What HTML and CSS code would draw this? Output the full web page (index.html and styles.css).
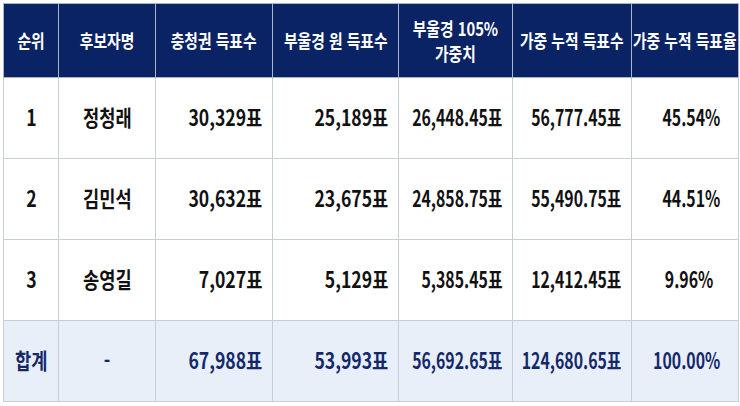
FILE: index.html
```html
<!DOCTYPE html>
<html lang="ko">
<head>
<meta charset="utf-8">
<title>가중 누적 득표</title>
<link rel="stylesheet" href="styles.css">
</head>
<body>
<table class="votes">
  <colgroup>
    <col class="c1"><col class="c2"><col class="c3"><col class="c4"><col class="c5"><col class="c6"><col class="c7">
  </colgroup>
  <thead>
    <tr>
      <th><div class="cell mid"><span class="t">순위</span></div></th>
      <th><div class="cell mid"><span class="t">후보자명</span></div></th>
      <th><div class="cell mid"><span class="t">충청권 득표수</span></div></th>
      <th><div class="cell mid"><span class="t">부울경 원 득표수</span></div></th>
      <th><div class="cell mid"><span class="t">부울경 105%<br>가중치</span></div></th>
      <th><div class="cell mid"><span class="t">가중 누적 득표수</span></div></th>
      <th><div class="cell mid"><span class="t">가중 누적 득표율</span></div></th>
    </tr>
  </thead>
  <tbody>
    <tr>
      <td><div class="cell mid"><span class="t">1</span></div></td>
      <td><div class="cell mid"><span class="t">정청래</span></div></td>
      <td><div class="cell end"><span class="t">30,329표</span></div></td>
      <td><div class="cell end"><span class="t">25,189표</span></div></td>
      <td><div class="cell end"><span class="t dec">26,448.45표</span></div></td>
      <td><div class="cell end"><span class="t dec">56,777.45표</span></div></td>
      <td><div class="cell end pct"><span class="t dec">45.54%</span></div></td>
    </tr>
    <tr>
      <td><div class="cell mid"><span class="t">2</span></div></td>
      <td><div class="cell mid"><span class="t">김민석</span></div></td>
      <td><div class="cell end"><span class="t">30,632표</span></div></td>
      <td><div class="cell end"><span class="t">23,675표</span></div></td>
      <td><div class="cell end"><span class="t dec">24,858.75표</span></div></td>
      <td><div class="cell end"><span class="t dec">55,490.75표</span></div></td>
      <td><div class="cell end pct"><span class="t dec">44.51%</span></div></td>
    </tr>
    <tr>
      <td><div class="cell mid"><span class="t">3</span></div></td>
      <td><div class="cell mid"><span class="t">송영길</span></div></td>
      <td><div class="cell end"><span class="t">7,027표</span></div></td>
      <td><div class="cell end"><span class="t">5,129표</span></div></td>
      <td><div class="cell end"><span class="t dec">5,385.45표</span></div></td>
      <td><div class="cell end"><span class="t dec">12,412.45표</span></div></td>
      <td><div class="cell end pct pct-short"><span class="t dec">9.96%</span></div></td>
    </tr>
  </tbody>
  <tfoot>
    <tr>
      <td><div class="cell mid"><span class="t">합계</span></div></td>
      <td><div class="cell mid"><span class="t">-</span></div></td>
      <td><div class="cell end"><span class="t">67,988표</span></div></td>
      <td><div class="cell end"><span class="t">53,993표</span></div></td>
      <td><div class="cell end"><span class="t dec">56,692.65표</span></div></td>
      <td><div class="cell end"><span class="t dec">124,680.65표</span></div></td>
      <td><div class="cell end pct"><span class="t dec">100.00%</span></div></td>
    </tr>
  </tfoot>
</table>
</body>
</html>
```
FILE: styles.css
```css
html, body {
  margin: 0;
  padding: 0;
  background: #ffffff;
}
body {
  padding: 3px;
  font-family: "Noto Sans CJK KR", "Noto Sans", sans-serif;
  font-weight: 700;
}
.votes {
  border-collapse: collapse;
  table-layout: fixed;
  width: 735px;
}
.c1 { width: 55px; }
.c2 { width: 97px; }
.c3 { width: 117px; }
.c4 { width: 126px; }
.c5 { width: 114px; }
.c6 { width: 119px; }
.c7 { width: 107px; }

.votes th,
.votes td {
  padding: 0;
  border: 1px solid #c9cdd4;
  overflow: visible;
}
.votes th {
  background: #0a2364;
  color: #ffffff;
  font-size: 18.5px;
  line-height: 25px;
  font-weight: 700;
  border-color: #aab3c8;
}
.votes td {
  background: #ffffff;
  color: #111111;
  font-size: 22px;
  line-height: 28px;
}
.votes tfoot td {
  background: #e9eff8;
  color: #14296a;
}
.cell {
  display: flex;
  align-items: center;
  box-sizing: border-box;
  height: 80px;
}
.votes td .cell {
  padding-bottom: 5px;
}
.votes th .cell {
  height: 73px;
}
.cell.mid {
  justify-content: center;
}
.cell.end {
  justify-content: flex-end;
  padding-right: 10px;
}
.cell.pct {
  padding-right: 18px;
}
.cell.pct-short {
  padding-right: 25px;
}
.t {
  display: inline-block;
  flex-shrink: 0;
  white-space: nowrap;
  transform: scaleX(0.8);
  text-align: center;
}
.t.dec {
  transform: scaleX(0.72);
}
.mid .t {
  transform-origin: center center;
}
.end .t {
  transform-origin: right center;
}
```
